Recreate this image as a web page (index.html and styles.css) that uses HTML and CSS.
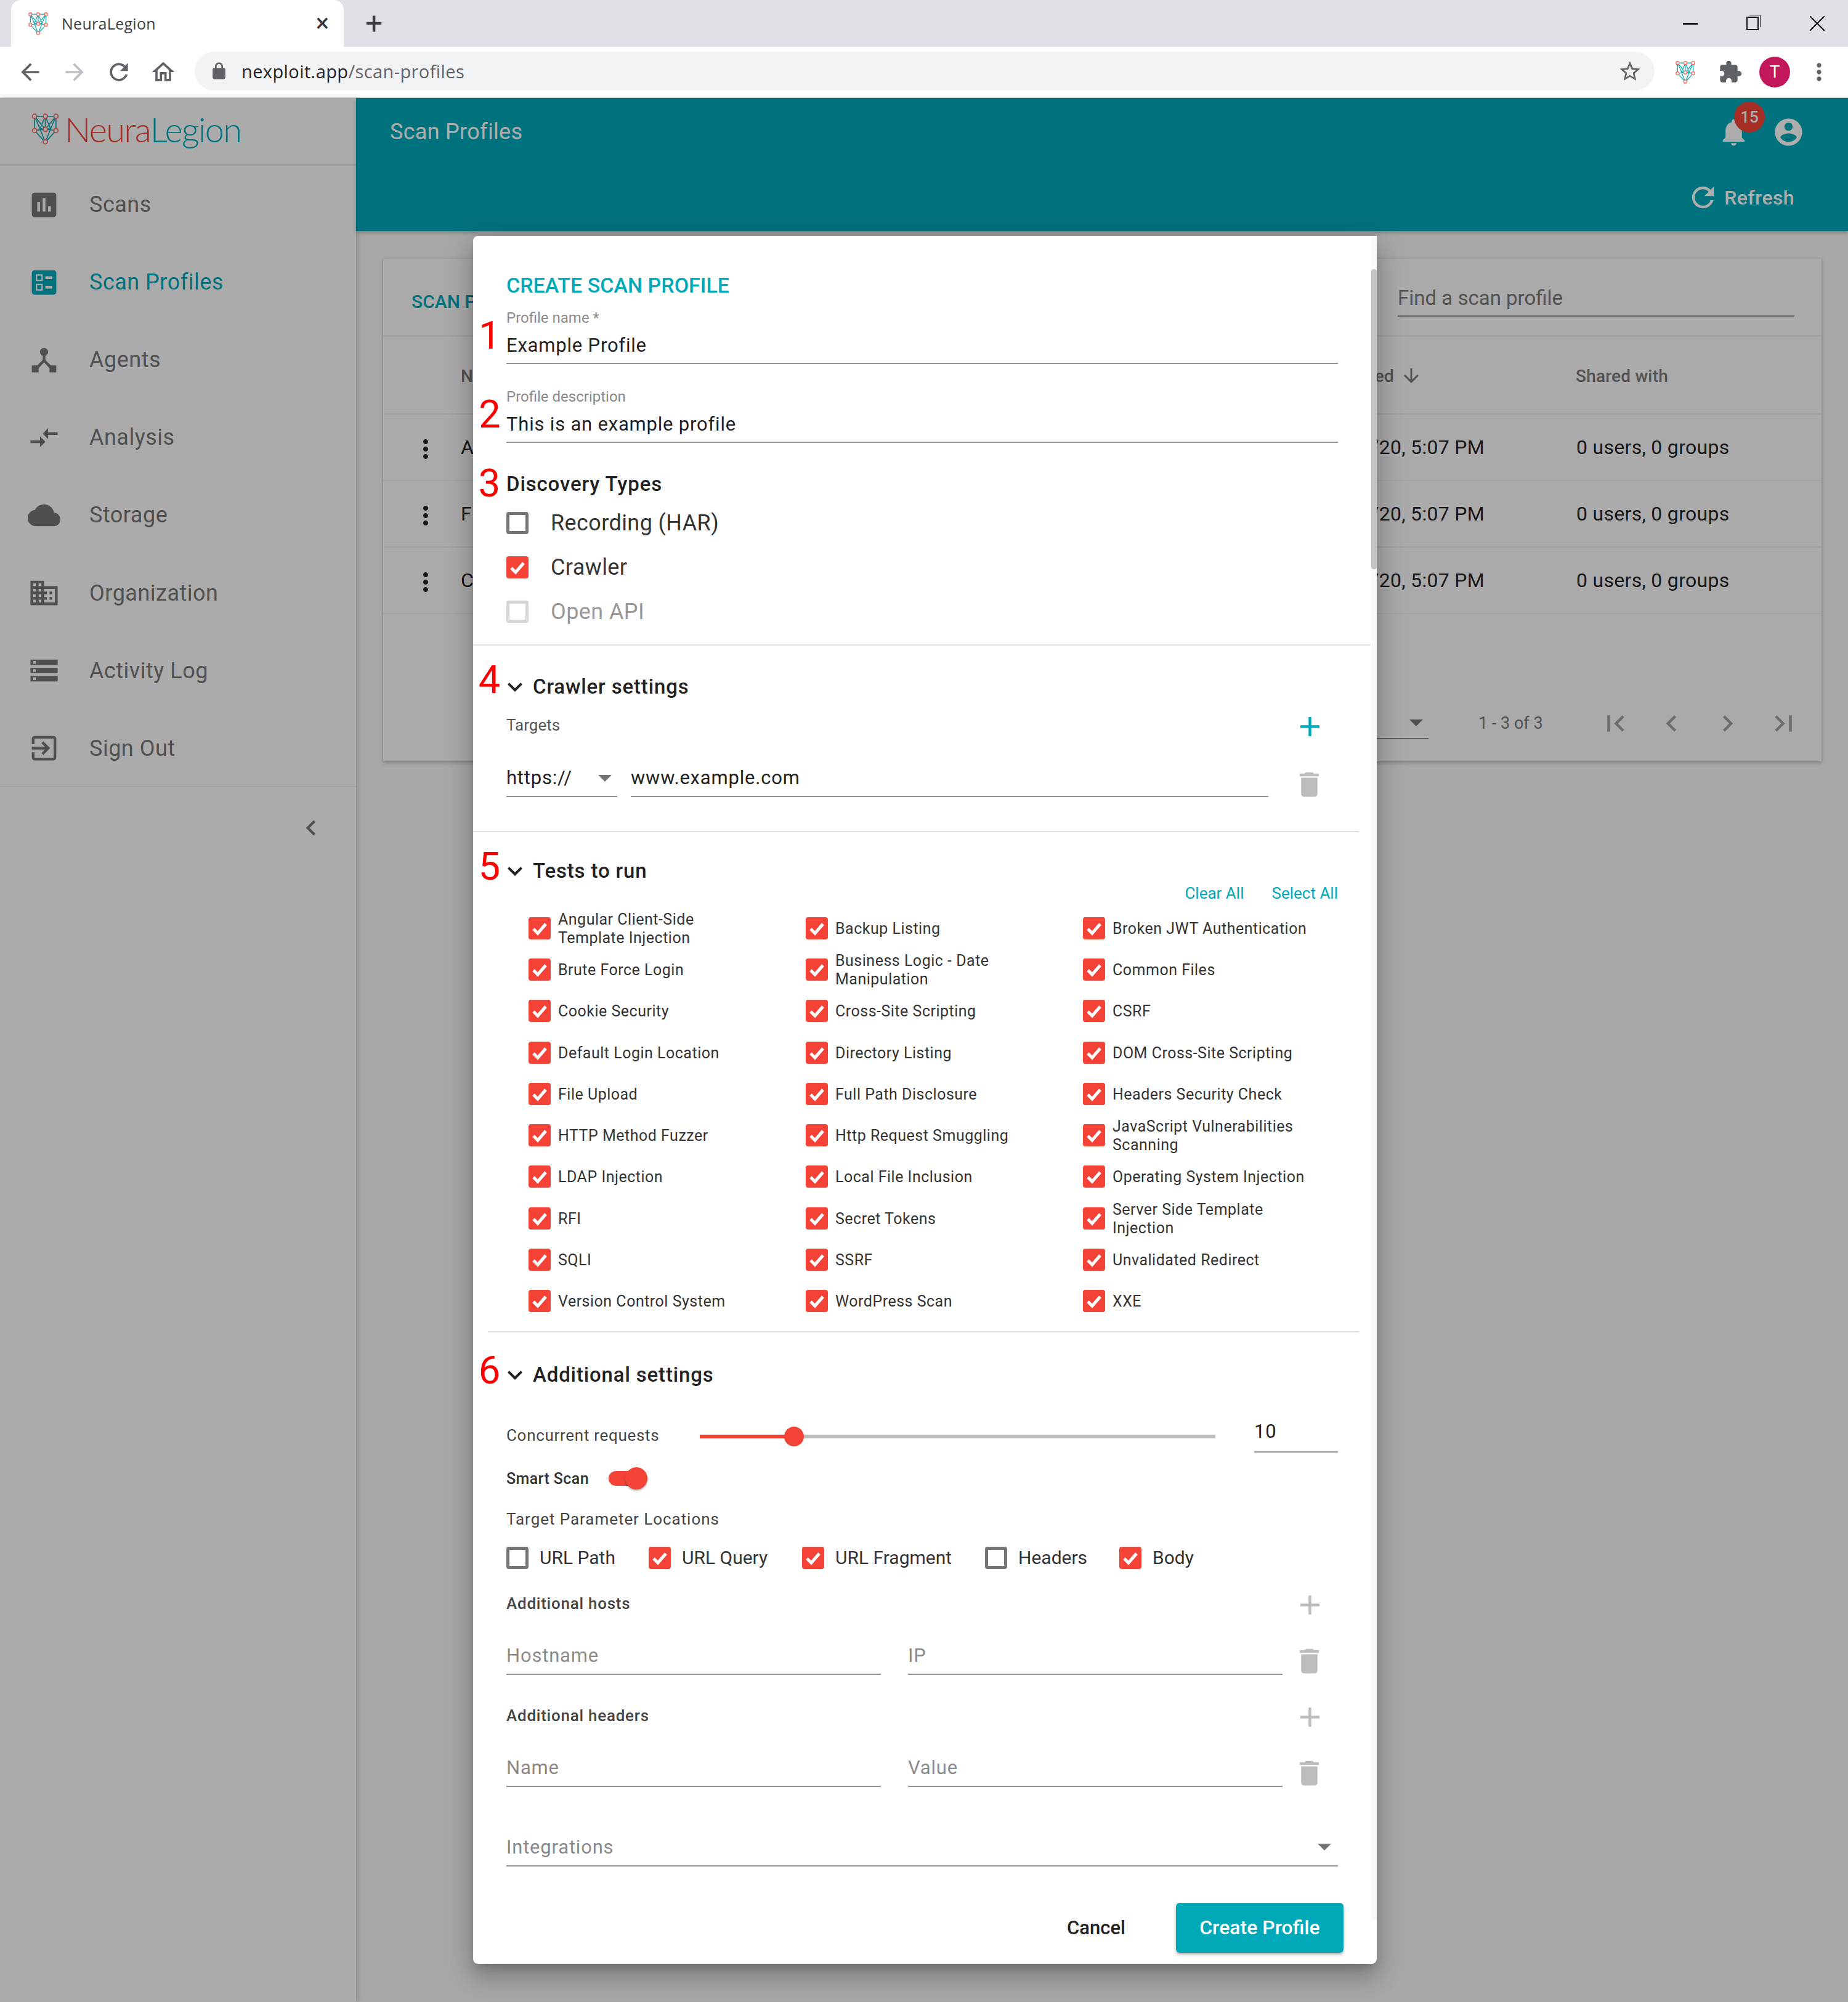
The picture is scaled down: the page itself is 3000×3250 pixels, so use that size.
FILE: index.html
```html
<!DOCTYPE html>
<html>
<head>
    <title>NeuraLegion</title>
    <link rel="stylesheet" href="styles.css">
</head>
<body>
    <svg class="sprite" xmlns="http://www.w3.org/2000/svg">
        <symbol id="i-scans" viewBox="0 0 24 24"><path d="M19 3H5c-1.1 0-2 .9-2 2v14c0 1.1.9 2 2 2h14c1.1 0 2-.9 2-2V5c0-1.1-.9-2-2-2zM9 17H7v-7h2v7zm4 0h-2V7h2v10zm4 0h-2v-4h2v4z"/></symbol>
        <symbol id="i-ballot" viewBox="0 0 24 24"><path d="M13 9.5h5v-2h-5v2zm0 7h5v-2h-5v2zm6 4.5H5c-1.1 0-2-.9-2-2V5c0-1.1.9-2 2-2h14c1.1 0 2 .9 2 2v14c0 1.1-.9 2-2 2zM6 11h5V6H6v5zm1-4h3v3H7V7zM6 18h5v-5H6v5zm1-4h3v3H7v-3z"/></symbol>
        <symbol id="i-hub" viewBox="0 0 24 24"><path d="M17 16l-4-4V8.82C14.16 8.4 15 7.3 15 6c0-1.66-1.34-3-3-3S9 4.34 9 6c0 1.3.84 2.4 2 2.82V12l-4 4H3v5h5v-3.05l4-4.2 4 4.2V21h5v-5h-4z"/></symbol>
        <symbol id="i-compare" viewBox="0 0 24 24"><path d="M9.01 14H2v2h7.01v3L13 15l-3.99-4v3zm5.98-1v-3H22V8h-7.01V5L11 9l3.99 4z"/></symbol>
        <symbol id="i-cloud" viewBox="0 0 24 24"><path d="M19.35 10.04C18.67 6.59 15.64 4 12 4 9.11 4 6.6 5.64 5.35 8.04 2.34 8.36 0 10.91 0 14c0 3.31 2.69 6 6 6h13c2.76 0 5-2.24 5-5 0-2.64-2.05-4.78-4.65-4.96z"/></symbol>
        <symbol id="i-domain" viewBox="0 0 24 24"><path d="M12 7V3H2v18h20V7H12zM6 19H4v-2h2v2zm0-4H4v-2h2v2zm0-4H4V9h2v2zm0-4H4V5h2v2zm4 12H8v-2h2v2zm0-4H8v-2h2v2zm0-4H8V9h2v2zm0-4H8V5h2v2zm10 12h-8v-2h2v-2h-2v-2h2v-2h-2V9h8v10zm-2-8h-2v2h2v-2zm0 4h-2v2h2v-2z"/></symbol>
        <symbol id="i-storage" viewBox="0 0 24 24"><path d="M2 20h20v-4H2v4zm2-3h2v2H4v-2zM2 4v4h20V4H2zm4 3H4V5h2v2zm-4 7h20v-4H2v4zm2-3h2v2H4v-2z"/></symbol>
        <symbol id="i-exit" viewBox="0 0 24 24"><path d="M10.09 15.59L11.5 17l5-5-5-5-1.41 1.41L12.67 11H3v2h9.67l-2.58 2.59zM19 3H5c-1.11 0-2 .9-2 2v4h2V5h14v14H5v-4H3v4c0 1.1.89 2 2 2h14c1.1 0 2-.9 2-2V5c0-1.1-.9-2-2-2z"/></symbol>
        <symbol id="i-delete" viewBox="0 0 24 24"><path d="M6 19c0 1.1.9 2 2 2h8c1.1 0 2-.9 2-2V7H6v12zM19 4h-3.5l-1-1h-5l-1 1H5v2h14V4z"/></symbol>
        <symbol id="i-add" viewBox="0 0 24 24"><path d="M19 13h-6v6h-2v-6H5v-2h6V5h2v6h6v2z"/></symbol>
        <symbol id="i-more" viewBox="0 0 24 24"><path d="M16.59 8.59L12 13.17 7.41 8.59 6 10l6 6 6-6z"/></symbol>
        <symbol id="i-left" viewBox="0 0 24 24"><path d="M15.41 7.41L14 6l-6 6 6 6 1.41-1.41L10.83 12z"/></symbol>
        <symbol id="i-right" viewBox="0 0 24 24"><path d="M10 6L8.59 7.41 13.17 12l-4.58 4.59L10 18l6-6z"/></symbol>
        <symbol id="i-first" viewBox="0 0 24 24"><path d="M18.41 16.59L13.82 12l4.59-4.59L17 6l-6 6 6 6zM6 6h2v12H6z"/></symbol>
        <symbol id="i-last" viewBox="0 0 24 24"><path d="M5.59 7.41L10.18 12l-4.59 4.59L7 18l6-6-6-6zM16 6h2v12h-2z"/></symbol>
        <symbol id="i-refresh" viewBox="0 0 24 24"><path d="M17.65 6.35C16.2 4.9 14.21 4 12 4c-4.42 0-7.99 3.58-7.99 8s3.57 8 7.99 8c3.73 0 6.84-2.55 7.73-6h-2.08c-.82 2.33-3.04 4-5.65 4-3.31 0-6-2.69-6-6s2.69-6 6-6c1.66 0 3.14.69 4.22 1.78L13 11h7V4l-2.35 2.35z"/></symbol>
        <symbol id="i-bell" viewBox="0 0 24 24"><path d="M12 22c1.1 0 2-.9 2-2h-4c0 1.1.89 2 2 2zm6-6v-5c0-3.07-1.64-5.64-4.5-6.32V4c0-.83-.67-1.5-1.5-1.5s-1.5.67-1.5 1.5v.68C7.63 5.36 6 7.92 6 11v5l-2 2v1h16v-1l-2-2z"/></symbol>
        <symbol id="i-user" viewBox="0 0 24 24"><path d="M12 2C6.48 2 2 6.48 2 12s4.48 10 10 10 10-4.48 10-10S17.52 2 12 2zm0 3c1.66 0 3 1.34 3 3s-1.34 3-3 3-3-1.34-3-3 1.34-3 3-3zm0 14.2c-2.5 0-4.71-1.28-6-3.22.03-1.99 4-3.08 6-3.08 1.99 0 5.97 1.09 6 3.08-1.29 1.94-3.5 3.22-6 3.22z"/></symbol>
        <symbol id="i-down" viewBox="0 0 24 24"><path d="M20 12l-1.41-1.41L13 16.17V4h-2v12.17l-5.58-5.59L4 12l8 8 8-8z"/></symbol>
        <symbol id="i-vert" viewBox="0 0 24 24"><path d="M12 8c1.1 0 2-.9 2-2s-.9-2-2-2-2 .9-2 2 .9 2 2 2zm0 2c-1.1 0-2 .9-2 2s.9 2 2 2 2-.9 2-2-.9-2-2-2zm0 6c-1.1 0-2 .9-2 2s.9 2 2 2 2-.9 2-2-.9-2-2-2z"/></symbol>
        <symbol id="i-lock" viewBox="0 0 24 24"><path d="M18 8h-1V6c0-2.76-2.24-5-5-5S7 3.24 7 6v2H6c-1.1 0-2 .9-2 2v10c0 1.1.9 2 2 2h12c1.1 0 2-.9 2-2V10c0-1.1-.9-2-2-2zM9 6c0-1.66 1.34-3 3-3s3 1.34 3 3v2H9V6z"/></symbol>
        <symbol id="i-star" viewBox="0 0 24 24"><path d="M22 9.24l-7.19-.62L12 2 9.19 8.63 2 9.24l5.46 4.73L5.82 21 12 17.27 18.18 21l-1.63-7.03L22 9.24zM12 15.4l-3.76 2.27 1-4.28-3.32-2.88 4.38-.38L12 6.1l1.71 4.04 4.38.38-3.32 2.88 1 4.28L12 15.4z"/></symbol>
        <symbol id="i-puzzle" viewBox="0 0 24 24"><path d="M20.5 11H19V7c0-1.1-.9-2-2-2h-4V3.5C13 2.12 11.88 1 10.5 1S8 2.12 8 3.5V5H4c-1.1 0-1.99.9-1.99 2v3.8H3.5c1.49 0 2.7 1.21 2.7 2.7s-1.21 2.7-2.7 2.7H2V20c0 1.1.9 2 2 2h3.8v-1.5c0-1.49 1.21-2.7 2.7-2.7 1.49 0 2.7 1.21 2.7 2.7V22H17c1.1 0 2-.9 2-2v-4h1.5c1.38 0 2.5-1.12 2.5-2.5S21.88 11 20.5 11z"/></symbol>
        <symbol id="i-back" viewBox="0 0 24 24"><path d="M20 11H7.83l5.59-5.59L12 4l-8 8 8 8 1.41-1.41L7.83 13H20v-2z"/></symbol>
        <symbol id="i-forward" viewBox="0 0 24 24"><path d="M12 4l-1.41 1.41L16.17 11H4v2h12.17l-5.58 5.59L12 20l8-8z"/></symbol>
        <symbol id="i-home" viewBox="0 0 24 24"><path d="M12 5.69l5 4.5V18h-2v-6H9v6H7v-7.81l5-4.5M12 3L2 12h3v8h6v-6h2v6h6v-8h3L12 3z"/></symbol>
        <symbol id="i-check" viewBox="0 0 36 36"><path d="M8 19l7 7 13-15" fill="none" stroke="#fff" stroke-width="5"/></symbol>
        <symbol id="i-logo" viewBox="0 0 48 54">
            <path d="M6 6H24H42M6 6L15 27L24 50L33 27L42 6M6 6L6 30L24 50L42 30L42 6M24 6L15 27M24 6L33 27M24 6L24 28M6 30L24 28L42 30M15 27L33 27M6 6L24 28L42 6" fill="none" stroke="#16a9b8" stroke-width="1.8"/>
            <g fill="#fff" stroke="#f0716a" stroke-width="2">
                <circle cx="6" cy="6" r="3.6"/><circle cx="24" cy="6" r="3.6"/><circle cx="42" cy="6" r="3.6"/>
                <circle cx="6" cy="30" r="3.6"/><circle cx="24" cy="28" r="3.6"/><circle cx="42" cy="30" r="3.6"/>
                <circle cx="24" cy="49" r="3.6"/>
            </g>
        </symbol>
    </svg>

    <!-- browser chrome -->
    <div class="tabstrip">
        <div class="tab">
            <svg class="tab-logo"><use href="#i-logo"/></svg>
            <span class="tab-title">NeuraLegion</span>
            <span class="tab-close">×</span>
        </div>
        <span class="new-tab">+</span>
        <div class="win-controls">
            <span class="win-min"></span>
            <span class="win-restore"></span>
            <svg class="win-close" viewBox="0 0 24 24"><path d="M0 0L24 24M24 0L0 24" stroke="#111" stroke-width="2"/></svg>
        </div>
    </div>
    <div class="toolbar">
        <svg class="tool-icon"><use href="#i-back"/></svg>
        <svg class="tool-icon off"><use href="#i-forward"/></svg>
        <svg class="tool-icon"><use href="#i-refresh"/></svg>
        <svg class="tool-icon"><use href="#i-home"/></svg>
        <div class="omnibox">
            <svg class="lock"><use href="#i-lock"/></svg>
            <span class="url">nexploit.app<span class="url-path">/scan-profiles</span></span>
            <svg class="star"><use href="#i-star"/></svg>
        </div>
        <svg class="ext-logo"><use href="#i-logo"/></svg>
        <svg class="tool-icon puzzle"><use href="#i-puzzle"/></svg>
        <span class="avatar">T</span>
        <svg class="tool-icon kebab"><use href="#i-vert"/></svg>
    </div>

    <!-- app behind the dialog -->
    <div class="app">
        <aside class="sidebar">
            <div class="brand">
                <svg class="brand-logo"><use href="#i-logo"/></svg>
                <span class="brand-name"><span class="brand-red">Neura</span>Legion</span>
            </div>
            <nav class="nav">
                <a class="nav-item"><svg class="nav-icon"><use href="#i-scans"/></svg>Scans</a>
                <a class="nav-item active"><svg class="nav-icon"><use href="#i-ballot"/></svg>Scan Profiles</a>
                <a class="nav-item"><svg class="nav-icon"><use href="#i-hub"/></svg>Agents</a>
                <a class="nav-item"><svg class="nav-icon"><use href="#i-compare"/></svg>Analysis</a>
                <a class="nav-item"><svg class="nav-icon"><use href="#i-cloud"/></svg>Storage</a>
                <a class="nav-item"><svg class="nav-icon"><use href="#i-domain"/></svg>Organization</a>
                <a class="nav-item"><svg class="nav-icon"><use href="#i-storage"/></svg>Activity Log</a>
                <a class="nav-item"><svg class="nav-icon"><use href="#i-exit"/></svg>Sign Out</a>
            </nav>
            <div class="collapse"><svg class="collapse-icon"><use href="#i-left"/></svg></div>
        </aside>

        <main class="main">
            <header class="topbar">
                <div class="topbar-row">
                    <span class="page-title">Scan Profiles</span>
                    <span class="bell-wrap">
                        <svg class="top-icon"><use href="#i-bell"/></svg>
                        <span class="badge">15</span>
                    </span>
                    <svg class="top-icon"><use href="#i-user"/></svg>
                </div>
                <div class="refresh">
                    <svg class="top-icon"><use href="#i-refresh"/></svg>
                    <span>Refresh</span>
                </div>
            </header>

            <section class="card">
                <div class="card-head">
                    <span class="card-title">SCAN PROFILES</span>
                    <div class="search">Find a scan profile</div>
                </div>
                <div class="table-head">
                    <span class="col-menu"></span>
                    <span class="col-name">Name</span>
                    <span class="col-date">Updated<svg class="sort-icon"><use href="#i-down"/></svg></span>
                    <span class="col-shared">Shared with</span>
                </div>
                <div class="table-row">
                    <span class="col-menu"><svg class="vert"><use href="#i-vert"/></svg></span>
                    <span class="col-name">A</span>
                    <span class="col-date">/20, 5:07 PM</span>
                    <span class="col-shared">0 users, 0 groups</span>
                </div>
                <div class="table-row">
                    <span class="col-menu"><svg class="vert"><use href="#i-vert"/></svg></span>
                    <span class="col-name">F</span>
                    <span class="col-date">/20, 5:07 PM</span>
                    <span class="col-shared">0 users, 0 groups</span>
                </div>
                <div class="table-row">
                    <span class="col-menu"><svg class="vert"><use href="#i-vert"/></svg></span>
                    <span class="col-name">C</span>
                    <span class="col-date">/20, 5:07 PM</span>
                    <span class="col-shared">0 users, 0 groups</span>
                </div>
                <div class="pager">
                    <span class="page-size"><i class="caret"></i></span>
                    <span class="page-range">1 - 3 of 3</span>
                    <svg class="page-icon"><use href="#i-first"/></svg>
                    <svg class="page-icon"><use href="#i-left"/></svg>
                    <svg class="page-icon"><use href="#i-right"/></svg>
                    <svg class="page-icon"><use href="#i-last"/></svg>
                </div>
            </section>
        </main>
    </div>

    <div class="backdrop"></div>

    <!-- dialog -->
    <div class="dialog">
        <div class="scroll-thumb"></div>
        <h2 class="dialog-title">CREATE SCAN PROFILE</h2>

        <div class="field first">
            <span class="num num-1">1</span>
            <div class="field-label">Profile name *</div>
            <div class="field-value">Example Profile</div>
        </div>
        <div class="field">
            <span class="num num-2">2</span>
            <div class="field-label">Profile description</div>
            <div class="field-value">This is an example profile</div>
        </div>

        <h3 class="group-title discovery"><span class="num num-3">3</span>Discovery Types</h3>
        <div class="discovery-list">
            <label class="big-check"><i class="box"></i>Recording (HAR)</label>
            <label class="big-check"><i class="box on"><svg><use href="#i-check"/></svg></i>Crawler</label>
            <label class="big-check disabled"><i class="box"></i>Open API</label>
        </div>

        <hr class="rule rule-wide">

        <h3 class="group-title crawler"><span class="num num-4">4</span><svg class="expand"><use href="#i-more"/></svg>Crawler settings</h3>
        <div class="sub-row targets"><span class="sub-label light">Targets</span><svg class="act teal"><use href="#i-add"/></svg></div>
        <div class="input-row target-row">
            <div class="input proto">https://<i class="caret"></i></div>
            <div class="input grow">www.example.com</div>
            <svg class="act trash"><use href="#i-delete"/></svg>
        </div>

        <hr class="rule rule-mid">

        <h3 class="group-title tests"><span class="num num-5">5</span><svg class="expand"><use href="#i-more"/></svg>Tests to run</h3>
        <div class="test-links"><a>Clear All</a><a>Select All</a></div>
        <div class="test-grid">
            <label class="test"><i class="box on"><svg><use href="#i-check"/></svg></i><span>Angular Client-Side<br>Template Injection</span></label>
            <label class="test"><i class="box on"><svg><use href="#i-check"/></svg></i><span>Backup Listing</span></label>
            <label class="test"><i class="box on"><svg><use href="#i-check"/></svg></i><span>Broken JWT Authentication</span></label>
            <label class="test"><i class="box on"><svg><use href="#i-check"/></svg></i><span>Brute Force Login</span></label>
            <label class="test"><i class="box on"><svg><use href="#i-check"/></svg></i><span>Business Logic - Date<br>Manipulation</span></label>
            <label class="test"><i class="box on"><svg><use href="#i-check"/></svg></i><span>Common Files</span></label>
            <label class="test"><i class="box on"><svg><use href="#i-check"/></svg></i><span>Cookie Security</span></label>
            <label class="test"><i class="box on"><svg><use href="#i-check"/></svg></i><span>Cross-Site Scripting</span></label>
            <label class="test"><i class="box on"><svg><use href="#i-check"/></svg></i><span>CSRF</span></label>
            <label class="test"><i class="box on"><svg><use href="#i-check"/></svg></i><span>Default Login Location</span></label>
            <label class="test"><i class="box on"><svg><use href="#i-check"/></svg></i><span>Directory Listing</span></label>
            <label class="test"><i class="box on"><svg><use href="#i-check"/></svg></i><span>DOM Cross-Site Scripting</span></label>
            <label class="test"><i class="box on"><svg><use href="#i-check"/></svg></i><span>File Upload</span></label>
            <label class="test"><i class="box on"><svg><use href="#i-check"/></svg></i><span>Full Path Disclosure</span></label>
            <label class="test"><i class="box on"><svg><use href="#i-check"/></svg></i><span>Headers Security Check</span></label>
            <label class="test"><i class="box on"><svg><use href="#i-check"/></svg></i><span>HTTP Method Fuzzer</span></label>
            <label class="test"><i class="box on"><svg><use href="#i-check"/></svg></i><span>Http Request Smuggling</span></label>
            <label class="test"><i class="box on"><svg><use href="#i-check"/></svg></i><span>JavaScript Vulnerabilities<br>Scanning</span></label>
            <label class="test"><i class="box on"><svg><use href="#i-check"/></svg></i><span>LDAP Injection</span></label>
            <label class="test"><i class="box on"><svg><use href="#i-check"/></svg></i><span>Local File Inclusion</span></label>
            <label class="test"><i class="box on"><svg><use href="#i-check"/></svg></i><span>Operating System Injection</span></label>
            <label class="test"><i class="box on"><svg><use href="#i-check"/></svg></i><span>RFI</span></label>
            <label class="test"><i class="box on"><svg><use href="#i-check"/></svg></i><span>Secret Tokens</span></label>
            <label class="test"><i class="box on"><svg><use href="#i-check"/></svg></i><span>Server Side Template<br>Injection</span></label>
            <label class="test"><i class="box on"><svg><use href="#i-check"/></svg></i><span>SQLI</span></label>
            <label class="test"><i class="box on"><svg><use href="#i-check"/></svg></i><span>SSRF</span></label>
            <label class="test"><i class="box on"><svg><use href="#i-check"/></svg></i><span>Unvalidated Redirect</span></label>
            <label class="test"><i class="box on"><svg><use href="#i-check"/></svg></i><span>Version Control System</span></label>
            <label class="test"><i class="box on"><svg><use href="#i-check"/></svg></i><span>WordPress Scan</span></label>
            <label class="test"><i class="box on"><svg><use href="#i-check"/></svg></i><span>XXE</span></label>
        </div>

        <hr class="rule rule-inner">

        <h3 class="group-title additional"><span class="num num-6">6</span><svg class="expand"><use href="#i-more"/></svg>Additional settings</h3>
        <div class="slider-row">
            <span class="slider-label">Concurrent requests</span>
            <div class="slider">
                <div class="slider-fill"></div>
                <div class="slider-thumb"></div>
            </div>
            <div class="input slider-value">10</div>
        </div>
        <div class="smart-row">
            <span class="smart-label">Smart Scan</span>
            <span class="toggle"><i class="toggle-thumb"></i></span>
        </div>
        <div class="sub-label param-title">Target Parameter Locations</div>
        <div class="param-row">
            <label class="param p1"><i class="box"></i>URL Path</label>
            <label class="param p2"><i class="box on"><svg><use href="#i-check"/></svg></i>URL Query</label>
            <label class="param p3"><i class="box on"><svg><use href="#i-check"/></svg></i>URL Fragment</label>
            <label class="param p4"><i class="box"></i>Headers</label>
            <label class="param"><i class="box on"><svg><use href="#i-check"/></svg></i>Body</label>
        </div>

        <div class="sub-row hosts"><span class="sub-label strong">Additional hosts</span><svg class="act add-grey"><use href="#i-add"/></svg></div>
        <div class="input-row pair-row">
            <div class="input half placeholder">Hostname</div>
            <div class="input half placeholder">IP</div>
            <svg class="act trash"><use href="#i-delete"/></svg>
        </div>
        <div class="sub-row headers"><span class="sub-label strong">Additional headers</span><svg class="act add-grey"><use href="#i-add"/></svg></div>
        <div class="input-row pair-row">
            <div class="input half placeholder">Name</div>
            <div class="input half placeholder">Value</div>
            <svg class="act trash"><use href="#i-delete"/></svg>
        </div>
        <div class="input integrations placeholder">Integrations<i class="caret"></i></div>

        <div class="dialog-actions">
            <button class="btn-cancel">Cancel</button>
            <button class="btn-create">Create Profile</button>
        </div>
    </div>
</body>
</html>
```
FILE: styles.css
```css
* { box-sizing: border-box; }
html, body {
    margin: 0;
    width: 3000px;
    height: 3250px;
    overflow: hidden;
    background: #f8f8f8;
    font-family: Roboto, "Noto Sans", sans-serif;
    color: #222;
}
.sprite { display: none; }
svg { display: block; fill: currentColor; }
i { font-style: normal; display: block; }
h2, h3 { margin: 0; font-weight: 500; }

/* browser chrome */
.tabstrip {
    position: relative;
    height: 76px;
    background: #dee1e6;
    display: flex;
    align-items: center;
    padding-left: 18px;
}
.tab {
    width: 540px;
    height: 76px;
    background: #fff;
    border-radius: 16px 16px 0 0;
    display: flex;
    align-items: center;
    padding-left: 27px;
}
.tab-logo { width: 34px; height: 38px; }
.tab-title {
    margin-left: 21px;
    font: 25px "Open Sans", sans-serif;
    letter-spacing: .3px;
    color: #3c4043;
    flex: 1;
}
.tab-close { font-size: 40px; color: #333; margin-right: 24px; line-height: 1; }
.new-tab { margin-left: 35px; font-size: 50px; font-weight: 400; color: #3c4043; line-height: 1; }
.win-controls {
    margin-left: auto;
    display: flex;
    align-items: center;
    padding-right: 38px;
    gap: 79px;
    height: 66px;
}
.win-min { width: 24px; height: 3px; background: #111; }
.win-restore {
    width: 20px;
    height: 22px;
    border: 2px solid #111;
    box-shadow: 3px -3px 0 -1px #dee1e6, 4px -4px 0 -1px #111;
}
.win-close { width: 24px; height: 24px; margin-left: 4px; }

.toolbar {
    height: 83px;
    background: #fff;
    border-bottom: 2px solid #dcdcdc;
    display: flex;
    align-items: center;
    padding-left: 27px;
    color: #5f6368;
}
.tool-icon { width: 44px; height: 44px; margin-right: 28px; flex: none; }
.tool-icon.off { color: #bdc1c6; }
.omnibox {
    width: 2370px;
    height: 63px;
    margin-top: -2px;
    margin-left: 1px;
    border-radius: 32px;
    background: #f1f3f4;
    display: flex;
    align-items: center;
    padding-left: 24px;
}
.lock { width: 31px; height: 31px; }
.url { margin-left: 21px; font: 29px "Open Sans", sans-serif; letter-spacing: .4px; color: #202124; }
.url-path { color: #5f6368; }
.star { width: 40px; height: 40px; margin-left: auto; margin-right: 20px; }
.ext-logo { width: 34px; height: 38px; margin-left: 33px; }
.tool-icon.puzzle { margin: 0 0 0 36px; width: 40px; height: 40px; }
.avatar {
    width: 50px;
    height: 50px;
    margin-left: 27px;
    border-radius: 50%;
    background: #c2185b;
    color: #fff;
    font-size: 28px;
    text-align: center;
    line-height: 50px;
}
.tool-icon.kebab { margin: 0 0 0 25px; }

/* app */
.app {
    height: 3091px;
    display: flex;
}
.sidebar {
    width: 578px;
    flex: none;
    background: #fdfdfd;
    box-shadow: 2px 0 8px rgba(0, 0, 0, .2);
    color: #767676;
    position: relative;
}
.brand {
    height: 110px;
    border-bottom: 3px solid #e8e8e8;
    display: flex;
    align-items: center;
    padding-left: 50px;
}
.brand-logo { width: 47px; height: 52px; margin-top: -8px; }
.brand-name {
    margin-left: 8px;
    margin-top: -6px;
    font: 300 56px Lato, sans-serif;
    color: #00a9b8;
    letter-spacing: -1.7px;
}
.brand-red { color: #ef4338; }
.nav { height: 1009px; border-bottom: 2px solid #eee; }
.nav-item {
    height: 126.1px;
    display: flex;
    align-items: center;
    padding-left: 45px;
    font-size: 36px;
    letter-spacing: .5px;
}
.nav-item.active { color: #00a9b8; }
.nav-icon { width: 53px; height: 53px; margin-right: 47px; color: #757575; }
.active .nav-icon { color: #00a9b8; }
.collapse { display: flex; justify-content: flex-end; padding: 41px 48px 0 0; }
.collapse-icon { width: 50px; height: 50px; color: #757575; }

.main { flex: 1; position: relative; }
.topbar {
    height: 216px;
    background: #00a9b8;
    color: #fff;
    box-shadow: 0 3px 6px rgba(0, 0, 0, .25);
    padding: 0 70px 0 55px;
}
.topbar-row {
    height: 110px;
    display: flex;
    align-items: center;
}
.page-title { font-size: 36px; margin-right: auto; letter-spacing: .3px; }
.top-icon { width: 53px; height: 53px; flex: none; }
.bell-wrap { position: relative; margin-right: 36px; }
.badge {
    position: absolute;
    left: 27px;
    top: -23px;
    width: 50px;
    height: 50px;
    border-radius: 50%;
    background: #f44336;
    font-size: 26px;
    font-weight: 500;
    line-height: 50px;
    text-align: center;
}
.refresh {
    display: flex;
    align-items: center;
    justify-content: flex-end;
    gap: 8px;
    margin-top: 25px;
    font-size: 32px;
    font-weight: 500;
    letter-spacing: .4px;
    padding-right: 17px;
}

.card {
    margin: 45px 43px 0 44px;
    height: 816px;
    background: #fbfbfb;
    box-shadow: 0 2px 6px rgba(0, 0, 0, .3);
}
.card-head {
    height: 127px;
    border-bottom: 3px solid #efefef;
    display: flex;
    padding: 0 44px 0 46px;
    justify-content: space-between;
}
.card-title { color: #00a9b8; font-size: 30px; font-weight: 500; margin-top: 52px; }
.search {
    width: 644px;
    height: 94px;
    border-bottom: 2px solid #949494;
    color: #7a7a7a;
    font-size: 33px;
    padding: 44px 0 0;
    line-height: 40px;
}
.table-head, .table-row {
    display: flex;
    align-items: center;
    border-bottom: 2px solid #efefef;
}
.table-head { height: 126px; padding-top: 2px; font-size: 28px; letter-spacing: .2px; color: #7a7a7a; font-weight: 500; }
.table-row { height: 108px; font-size: 32px; letter-spacing: .3px; color: #242424; }
.col-menu { width: 126px; padding-left: 45px; }
.col-name { width: 100px; }
.col-date {
    width: 1562px;
    display: flex;
    justify-content: flex-end;
    align-items: center;
}
.table-head .col-date { width: 1461px; padding-right: 0; }
.table-head .col-name { width: 100px; }
.col-shared { margin-left: 149px; }
.table-head .col-shared { margin-left: 249px; }
.sort-icon { width: 36px; height: 36px; margin-left: 10px; }
.vert { width: 48px; height: 48px; margin-top: 6px; color: #222; }
.pager {
    display: flex;
    align-items: center;
    height: 240px;
    padding-top: 114px;
    color: #7a7a7a;
}
.page-size {
    width: 170px;
    height: 52px;
    margin-left: 1527px;
    border-bottom: 2px solid #949494;
    position: relative;
}
.page-size .caret { position: absolute; right: 9px; top: 20px; }
.page-range { font-size: 27px; margin-left: 81px; width: 196px; }
.page-icon { width: 53px; height: 53px; margin-left: 38px; color: #a0a0a0; }
.page-icon:first-of-type { margin-left: 0; }
.caret {
    width: 0;
    height: 0;
    border-left: 11px solid transparent;
    border-right: 11px solid transparent;
    border-top: 11px solid #757575;
}

.backdrop {
    position: absolute;
    left: 0;
    top: 159px;
    width: 3000px;
    height: 3091px;
    background: rgba(0, 0, 0, .32);
}

/* dialog */
.dialog {
    position: absolute;
    left: 768px;
    top: 383px;
    width: 1467px;
    height: 2805px;
    background: #fff;
    border-radius: 8px;
    padding: 60px 63px 0 54px;
    box-shadow: 0 11px 15px -7px rgba(0, 0, 0, .2), 0 24px 38px 3px rgba(0, 0, 0, .14), 0 9px 46px 8px rgba(0, 0, 0, .12);
}
.dialog::after {
    content: "";
    position: absolute;
    right: 0;
    top: 0;
    bottom: 70px;
    width: 9px;
    background: #fafafa;
}
.scroll-thumb {
    position: absolute;
    z-index: 1;
    right: 0;
    top: 54px;
    width: 9px;
    height: 487px;
    border-radius: 4px;
    background: #c4c4c4;
}
.dialog-title {
    height: 40px;
    line-height: 40px;
    font-size: 34px;
    color: #00a9b8;
}
.num {
    position: absolute;
    left: -50px;
    width: 46px;
    text-align: center;
    color: #f00;
    font: 400 63px/62px Roboto, sans-serif;
}
.field { position: relative; margin-top: 39px; height: 89px; border-bottom: 2px solid #949494; }
.field.first { margin-top: 19px; }
.num-1 { top: 12px; }
.num-2 { top: 12px; }
.field-label { height: 39px; line-height: 28px; font-size: 24px; color: #8a8a8a; }
.field-value { height: 40px; line-height: 40px; font-size: 31px; letter-spacing: .8px; color: #222; }
.group-title {
    position: relative;
    height: 40px;
    line-height: 40px;
    font-size: 33px;
    letter-spacing: .85px;
    display: flex;
    align-items: center;
    color: #222;
}
.discovery { margin-top: 47px; }
.num-3 { top: -12px; }
.discovery-list { margin-top: 7px; }
.big-check {
    height: 72px;
    display: flex;
    align-items: center;
    font-size: 36px;
    letter-spacing: .4px;
    color: #333;
}
.big-check .box { margin-right: 36px; }
.big-check.disabled { color: #999; }
.big-check.disabled .box { border-color: #d6d6d6; }
.box {
    width: 36px;
    height: 36px;
    flex: none;
    border: 5px solid #757575;
    border-radius: 4px;
}
.box.on { border: 0; background: #f44336; }
.box svg { width: 36px; height: 36px; }
.rule { display: block; height: 2px; border: 0; background: #e0e0e0; padding: 0; }
.rule-wide { margin: 17px -53px 0 -54px; }
.crawler { margin-top: 47px; }
.num-4 { top: -22px; }
.expand { width: 48px; height: 48px; margin: 0 5px 0 -10px; color: #222; }
.sub-row { display: flex; align-items: center; justify-content: space-between; height: 44px; }
.targets { margin-top: 22px; }
.sub-label { font-size: 26px; line-height: 30px; color: #555; }
.sub-label.light { margin-top: -4px; }
.sub-label.strong { margin-top: -6px; letter-spacing: .75px; color: #444; font-weight: 500; }
.act { width: 53px; height: 53px; flex: none; margin-right: 19px; }
.act.teal { color: #00a9b8; }
.act.add-grey { color: #bdbdbd; }
.act.trash { color: #bdbdbd; align-self: flex-end; margin-bottom: -4px; }
.input-row { display: flex; }
.input {
    flex: none;
    height: 51px;
    line-height: 40px;
    font-size: 31px;
    letter-spacing: .8px;
    border-bottom: 2px solid #949494;
    color: #222;
    position: relative;
}
.target-row { margin-top: 42px; align-items: flex-end; }
.target-row .trash { margin-bottom: -6px; }
.proto { width: 180px; margin-right: 22px; }
.proto .caret { position: absolute; right: 9px; top: 15px; }
.grow { width: 1035px; margin-right: 40px; }
.rule-mid { margin: 55px -35px 0 -54px; }
.tests { margin-top: 43px; }
.num-5 { top: -18px; }
.test-links {
    display: flex;
    justify-content: flex-end;
    gap: 45px;
    height: 30px;
    margin-top: 1px;
    line-height: 30px;
    font-size: 26px;
    color: #00a9b8;
}
.test-grid {
    margin: 8px 0 0 36px;
    display: grid;
    grid-template-columns: 450px 450px 1fr;
    grid-auto-rows: 67.3px;
}
.test { display: flex; align-items: center; font-size: 25px; letter-spacing: .5px; line-height: 30px; color: #333; }
.test span { margin-top: 1px; padding-top: 1px; }
.test .box { margin-right: 12px; }
.rule-inner { margin: 15px -35px 0 -30px; }
.additional { margin-top: 49px; }
.num-6 { top: -18px; }
.slider-row { display: flex; align-items: center; height: 60px; margin-top: 50px; }
.slider-label { width: 314px; font-size: 26px; letter-spacing: .7px; margin-top: -3px; color: #444; }
.slider { position: relative; width: 837px; height: 6px; background: #bdbdbd; }
.slider-fill { width: 153px; height: 6px; background: #f44336; }
.slider-thumb {
    position: absolute;
    left: 137px;
    top: -13px;
    width: 32px;
    height: 32px;
    border-radius: 50%;
    background: #f44336;
}
.slider-value { width: 136px; margin-left: 63px; align-self: flex-start; margin-top: 2px; height: 54px; }
.smart-row { display: flex; align-items: center; height: 40px; margin-top: 18px; }
.smart-label { width: 166px; font-size: 25px; letter-spacing: .4px; margin-top: 2px; font-weight: 500; color: #333; }
.toggle { position: relative; width: 52px; height: 24px; border-radius: 12px; background: #f44336; }
.toggle-thumb {
    position: absolute;
    left: 27px;
    top: -6px;
    width: 36px;
    height: 36px;
    border-radius: 50%;
    background: #f44336;
    box-shadow: 0 2px 3px rgba(0, 0, 0, .3);
}
.param-title { margin-top: 31px; letter-spacing: .95px; color: #444; }
.param-row { display: flex; align-items: center; height: 50px; margin-top: 23px; }
.param { display: flex; align-items: center; font-size: 30px; color: #333; }
.param .box { margin-right: 18px; }
.p1 { width: 231px; }
.p2 { width: 249px; }
.p3 { width: 297px; }
.p4 { width: 218px; }
.hosts { margin-top: 30px; }
.pair-row { margin-top: 40px; align-items: flex-end; }
.half { width: 608px; margin-right: 44px; }
.half + .half { margin-right: 17px; }
.placeholder { color: #8a8a8a; }
.headers { margin-top: 47px; }
.integrations { margin-top: 78px; }
.integrations .caret { position: absolute; right: 11px; top: 14px; }
.dialog-actions {
    display: flex;
    justify-content: flex-end;
    align-items: center;
    margin: 59px -9px 0 0;
}
button { font-family: inherit; border: 0; background: none; }
.btn-cancel { font-size: 31px; font-weight: 500; color: #222; margin-right: 82px; padding: 0; }
.btn-create {
    width: 272px;
    height: 81px;
    border-radius: 6px;
    background: #00a9b8;
    color: #fff;
    font-size: 32px;
    font-weight: 500;
    box-shadow: 0 3px 5px rgba(0, 0, 0, .3);
}
```
